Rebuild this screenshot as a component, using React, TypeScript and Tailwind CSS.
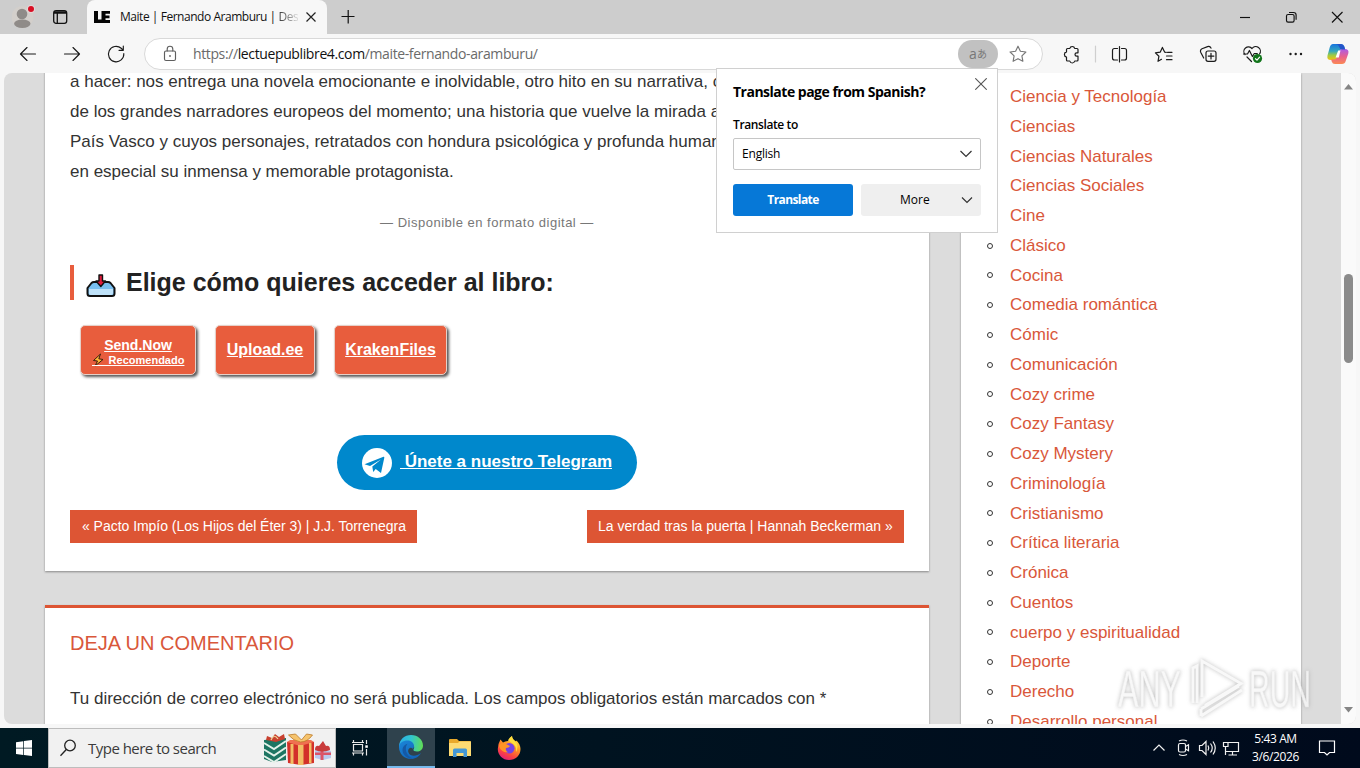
import type { ReactNode } from "react";

const categories = [
  "Ciencia y Tecnología", "Ciencias", "Ciencias Naturales", "Ciencias Sociales", "Cine", "Clásico", "Cocina",
  "Comedia romántica", "Cómic", "Comunicación", "Cozy crime", "Cozy Fantasy", "Cozy Mystery", "Criminología",
  "Cristianismo", "Crítica literaria", "Crónica", "Cuentos", "cuerpo y espiritualidad", "Deporte", "Derecho",
  "Desarrollo personal",
];

function Icon({ size = 20, className = "", children }: { size?: number; className?: string; children: ReactNode }) {
  return (
    <svg width={size} height={size} viewBox="0 0 20 20" fill="none" stroke="#1b1b1b" strokeWidth="1.15" strokeLinecap="round" strokeLinejoin="round" className={"shrink-0 " + className}>
      {children}
    </svg>
  );
}

function TabStrip() {
  return (
    <div className="flex h-[34px] bg-[#cdcdcd]">
      <div className="flex w-[87px] items-start bg-[#cdcdcd] pl-[12px]">
        <svg width="24" height="30" viewBox="12 0 24 30" className="shrink-0">
          <circle cx="22.5" cy="17" r="11" fill="#d3cfcb" />
          <circle cx="22" cy="14" r="5.3" fill="#8f8b88" />
          <ellipse cx="22.3" cy="23.8" rx="8.2" ry="4.2" fill="#8f8b88" />
          <circle cx="31" cy="9" r="4" fill="#e5d6d6" />
          <circle cx="31" cy="9" r="3" fill="#d80f24" />
        </svg>
        <svg width="16" height="34" viewBox="0 0 16 34" className="ml-[16px] shrink-0" fill="none" stroke="#111" strokeWidth="1.3">
          <rect x="1.7" y="10.7" width="13" height="12.6" rx="2.4" />
          <path d="M2 11.8h12.5M2 13.2h12.5M5.3 13v10" />
        </svg>
      </div>
      <div className="flex h-[34px] w-[240px] items-center rounded-t-[8px] bg-[#f7f7f7] pl-[7px]">
        <svg width="17" height="14" viewBox="0 0 17 14" fill="#050505">
          <path d="M0 1h4v8.500h3.500V13H0zM7.500 1H16v2.800h-4.500v1.700h4v2.700h-4v1.900H16V13H7.500z" />
        </svg>
        <div className="ml-[9px] w-[178px] overflow-hidden whitespace-nowrap font-['Open_Sans',sans-serif] text-[12px] leading-[18px] tracking-[-0.46px] text-[#111]">
          Maite | Fernando Aramburu | <span className="bg-linear-to-r from-[#333] to-[#ddd] bg-clip-text text-transparent">Des</span>
        </div>
        <svg width="12" height="12" viewBox="0 0 12 12" stroke="#222" strokeWidth="1.2" className="ml-[7px]">
          <path d="M1.500 1.500l9 9M10.500 1.500l-9 9" />
        </svg>
      </div>
      <svg width="16" height="34" viewBox="0 0 16 34" stroke="#111" strokeWidth="1.2" className="ml-[13px]">
        <path d="M1.500 16.500h13M8.200 10v13.500" />
      </svg>
      <div className="ml-auto flex items-center pr-[16px]">
        <svg width="104" height="34" viewBox="1240 0 104 34" fill="none" stroke="#111" strokeWidth="1.15">
          <path d="M1240 17.500h10" />
          <rect x="1286.500" y="14.500" width="7.600" height="7.600" rx="1.600" />
          <path d="M1289 12.500h4.500a2.600 2.600 0 0 1 2.600 2.600v4.700" />
          <path d="M1332 12l10.500 10.500M1342.500 12L1332 22.500" />
        </svg>
      </div>
    </div>
  );
}

function Toolbar() {
  return (
    <div className="flex h-[39px] items-center bg-[#f7f7f7] pl-[18px]">
      <Icon><path d="M17.500 10H2.500M9 3.500L2.500 10L9 16.500" /></Icon>
      <Icon className="ml-[24px]"><path d="M2.500 10h15M11 3.500L17.500 10L11 16.500" /></Icon>
      <Icon className="ml-[24px]"><path d="M17.800 9.600A7.700 7.700 0 1 1 15.200 4.300L17.200 6.100M17.300 2v4.300h-4.300" /></Icon>
      <div className="ml-[18px] flex h-[32px] w-[899px] items-center rounded-full border border-[#d9d9d9] bg-white pl-[15px]">
        <Icon size={20} className="opacity-70"><rect x="4.500" y="7" width="11" height="9.500" rx="1.500" /><path d="M7.200 7V5a2.800 2.800 0 0 1 5.600 0v2" /><circle cx="10" cy="12" r=".9" fill="#222" stroke="none" /></Icon>
        <div className="ml-[13px] whitespace-nowrap font-['Open_Sans',sans-serif] text-[14px] leading-[20px] tracking-[-0.38px] text-[#6a6a6a]">
          https://<span className="text-[#111]">lectuepublibre4.com</span>/maite-fernando-aramburu/
        </div>
        <div className="ml-auto flex items-center">
          <div className="flex h-[28px] w-[40px] items-center justify-center rounded-full bg-[#c1c1c1] font-['Open_Sans','Noto_Sans_CJK_JP',sans-serif] text-[12px] leading-none text-[#777]">
            <span className="text-[14px] leading-[14px]">a</span><span className="text-[10px] leading-[10px]">あ</span>
          </div>
          <Icon size={20} className="ml-[10px] mr-[14px] opacity-60"><path d="M10 2.200l2.400 5 5.500.8-4 3.800 1 5.500-4.900-2.600-4.900 2.600 1-5.500-4-3.800 5.500-.8z" /></Icon>
        </div>
      </div>
      <svg width="317" height="39" viewBox="1043 34 317 39" fill="none" stroke="#1b1b1b" strokeWidth="1.200" strokeLinejoin="round" strokeLinecap="round">
        <path d="M1067.500 48.500h2.300a2.500 2.500 0 0 1 4.900 0h2.300q1 0 1 1v3.300h-1.300a1.700 1.700 0 0 0 0 3.400h1.300v3.800q0 1-1 1h-2.300a2.500 2.500 0 0 1-4.900 0h-2.300q-1 0-1-1v-3a2.600 2.600 0 0 1 0-5.100v-2.400q0-1 1-1z" />
        <path d="M1095.500 46v16" stroke="#cfcfcf" />
        <path d="M1117.500 48.500h-3q-2 0-2 2v7.500q0 2 2 2h3M1121.500 48.500h3q2 0 2 2v7.500q0 2-2 2h-3M1119.500 46.500v15.500" />
        <path d="M1161.500 59.300l-3.500 2 .9-5-3.500-3.400 4.900-.8 2.100-4.700 2.200 4.700 1.700.2M1167.500 52.300h4.500M1166.500 56h5.500M1166.500 59.700h5.500" />
        <rect x="1206" y="51" width="10" height="10.300" rx="2" />
        <path d="M1211 53.300v5.700M1208.200 56.100h5.700M1203.700 58l-3-5.800a2.600 2.600 0 0 1 1.300-3.500l5.600-2.100a2.600 2.600 0 0 1 3.400 1.500" />
        <path d="M1245 54.500a4.600 4.600 0 0 1 7-6 4.600 4.600 0 0 1 7.500 5.500M1243.500 54h4l1.900-3.500 3 6 1.900-3h3M1247 57l4.500 4.500" />
        <circle cx="1257.500" cy="58.500" r="4.600" fill="#12751b" stroke="none" /><path d="M1255.500 58.700l1.500 1.400 2.600-3" stroke="#fff" />
        <g fill="#1b1b1b" stroke="none"><circle cx="1290.500" cy="54" r="1.200" /><circle cx="1295.700" cy="54" r="1.200" /><circle cx="1301" cy="54" r="1.200" /></g>
        <defs>
          <linearGradient id="cpA" x1="0" y1="0" x2="0" y2="1"><stop offset="0" stopColor="#1874df" /><stop offset=".45" stopColor="#35a9bd" /><stop offset=".7" stopColor="#9dcb45" /><stop offset="1" stopColor="#f4c20f" /></linearGradient>
          <linearGradient id="cpB" x1="0" y1="0" x2="0" y2="1"><stop offset="0" stopColor="#a95bea" /><stop offset=".5" stopColor="#e8618f" /><stop offset="1" stopColor="#fb8953" /></linearGradient>
        </defs>
        <g stroke="none">
          <path d="M1333 44h8q2.500 0 3.300 2.600l.8 2.900h-3q-2 0-2.700 2.300l-2 6.200q-.6 2-2.900 2h-3.500q-4.500 0-3.500-4.500l2.200-8q.9-3.500 3.300-3.500z" fill="url(#cpA)" />
          <path d="M1342 64h-7q-2.500 0-3.300-2.600l-.5-1.900h2.900q2.300 0 3-2.300l2-6q.7-2.300 3-2.300h2.700q4.600 0 3.500 4.500l-2.500 7.400q-.9 3.200-3.800 3.200z" fill="url(#cpB)" />
          <path d="M1336 44h5q2.500 0 3.300 2.600l.9 2.900h-3.200q-2.500-.5-3-3-.7-2.300-3-2.500z" fill="#2355c9" />
          <path d="M1338.200 50.500h2.300l-1.700 7h-3.200z" fill="#fff" />
        </g>
      </svg>
    </div>
  );
}

function TranslatePopup() {
  return (
    <div className="absolute left-[716px] top-[68px] z-10 h-[165px] w-[282px] border border-[#d0d0d0] bg-white px-[16px] font-['Open_Sans',sans-serif] text-[12px] text-black">
      <div className="flex h-[48px] items-center justify-between">
        <b className="whitespace-nowrap pb-[4px] text-[14px] font-bold tracking-[-0.5px]">Translate page from Spanish?</b>
        <svg width="12" height="12" viewBox="0 0 12 12" stroke="#555" strokeWidth="1.100" className="-mt-[18px] -mr-[6px]"><path d="M.3.3l11.400 11.400M11.700.3L.3 11.700" /></svg>
      </div>
      <div className="h-[21px] text-[12px] font-semibold leading-[16px] tracking-[-0.39px]">Translate to</div>
      <div className="flex h-[32px] items-center justify-between rounded-[2px] border border-[#c6c6c6] pl-[8px] pr-[8px] tracking-[-0.2px]">
        English
        <svg width="12" height="8" viewBox="0 0 12 8" fill="none" stroke="#333" strokeWidth="1.200"><path d="M.5 1l5.500 5.500L11.500 1" /></svg>
      </div>
      <div className="mt-[14px] flex gap-[8px]">
        <div className="flex h-[32px] w-[120px] items-center justify-center rounded-[3px] bg-[#0678d7] font-bold tracking-[-0.6px] text-white">Translate</div>
        <div className="flex h-[32px] w-[120px] items-center rounded-[3px] bg-[#efefef] pl-[39px] pr-[8px]">
          More
          <svg width="12" height="8" viewBox="0 0 12 8" fill="none" stroke="#333" strokeWidth="1.200" className="ml-auto"><path d="M1 1.500l5 5 5-5" /></svg>
        </div>
      </div>
    </div>
  );
}

const serverButton = "flex h-[50px] flex-col items-center justify-center rounded-[5px] border border-[#e6d0c8] bg-[#e85d3d] font-bold text-white shadow-[2px_2px_3px_#555]";

function Article() {
  return (
    <div className="h-[505px] bg-white px-[25px] shadow-[0_1px_2px_#888]">
      <div className="-mt-[7px] h-[120px] whitespace-nowrap pt-px text-[17px] leading-[30px] text-[#333]">
        <p>a hacer: nos entrega una novela emocionante e inolvidable, otro hito en su narrativa, c</p>
        <p>de los grandes narradores europeos del momento; una historia que vuelve la mirada a</p>
        <p>País Vasco y cuyos personajes, retratados con hondura psicológica y profunda human</p>
        <p>en especial su inmensa y memorable protagonista.</p>
      </div>
      <p className="mt-[27px] text-center text-[13px] leading-[20px] tracking-[0.5px] text-[#777]">— Disponible en formato digital —</p>
      <h2 className="mt-[32px] flex h-[35px] items-center border-l-4 border-[#e85d3d] pl-[12px] text-[25px] font-bold leading-[35px] text-[#222]">
        <svg width="30" height="26" viewBox="0 0 30 26" className="mt-[5px] mr-[10px]" strokeLinejoin="round">
          <path d="M1.500 16L5.500 11Q6.500 10 8 10h14q1.500 0 2.500 1l4 5v5.500q0 2.500-2.500 2.500H4q-2.500 0-2.500-2.500z" fill="#78bff0" stroke="#111" strokeWidth="2" />
          <path d="M3 17h24v4q0 2-2 2H5q-2 0-2-2z" fill="#bfe2f9" />
          <path d="M13 3h3.500v6h3l-4.700 5.500L10 9h3z" fill="#e01b3c" stroke="#111" strokeWidth="1.400" />
        </svg>
        Elige cómo quieres acceder al libro:
      </h2>
      <div className="mt-[25px] flex gap-[19px] pl-[10px]">
        <a className={serverButton + " w-[116px] pt-[3px] text-[14px] leading-[16px]"}>
          <span className="underline">Send.Now</span>
          <span className="flex items-center text-[11px] leading-[14px]">
            <svg width="14" height="14" viewBox="0 0 14 14" className="shrink-0"><path d="M8.500 1L1.500 7.500l4 .5-2.500 5 8-6.500-4.200-.7z" fill="#ffb636" stroke="#3a1c10" strokeWidth="1" /><path d="M0 12.500h14" stroke="#fff" /></svg>
            <span className="underline">&nbsp;Recomendado</span>
          </span>
        </a>
        <a className={serverButton + " w-[100px] text-[16px] underline"}>Upload.ee</a>
        <a className={serverButton + " w-[113px] text-[16px] underline"}>KrakenFiles</a>
      </div>
      <div className="mt-[60px] flex justify-center">
        <a className="flex h-[55px] w-[300px] items-center rounded-[28px] bg-[#0088cc] pl-[25px] text-[17px] font-bold text-white">
          <svg width="30" height="30" viewBox="0 0 30 30"><circle cx="15" cy="15" r="15" fill="#fff" /><path d="M2.500 16.300L21.500 8.700q1-.2.800 1L19 25l-5.300-3.900-2.500 2.800-.9-5.500 8.700-6.900-11 6.400z" fill="#0088cc" /></svg>
          <span className="ml-[8px] whitespace-pre pb-px tracking-[-0.01px] underline"> Únete a nuestro Telegram</span>
        </a>
      </div>
      <div className="mt-[20px] flex justify-between text-[14px] leading-[33px] text-white">
        <a className="w-[347px] whitespace-nowrap bg-[#dd5534] pl-[12px] tracking-[-0.03px]">« Pacto Impío (Los Hijos del Éter 3) | J.J. Torrenegra</a>
        <a className="w-[317px] whitespace-nowrap bg-[#dd5534] pl-[11px]">La verdad tras la puerta | Hannah Beckerman »</a>
      </div>
    </div>
  );
}

function Watermark() {
  return (
    <svg width="208" height="72" viewBox="1110 652 208 72" className="absolute left-[1110px] top-[652px] z-10 opacity-80 drop-shadow-[0_0_2px_#aaa]" fill="none">
      <g fill="#f7f7f7" stroke="#e8e8e8" strokeWidth=".5" fontFamily="'Liberation Sans', sans-serif" fontSize="52">
        <text x="1118" y="707" textLength="63" lengthAdjust="spacingAndGlyphs">ANY</text>
        <text x="1249" y="707" textLength="62" lengthAdjust="spacingAndGlyphs">RUN</text>
      </g>
      <path d="M1202 697v-36l39 22.500-36 22M1193 703v-35l4-2v37M1201 716l41-26M1201 709l38-23M1201 716v-7" stroke="#f7f7f7" strokeWidth="3" />
    </svg>
  );
}

function Gifts() {
  return (
    <svg width="68" height="36" viewBox="263 730 68 36" className="shrink-0">
      <path d="M264 740l22-2v22l-14 2-8-3z" fill="#1d7562" />
      <path d="M264 743l10 6 12-8M264 749.500l10 6 12-8M264 756l10 6 12-8" stroke="#e3f1e9" strokeWidth="2" fill="none" />
      <path d="M266 740l1-4 5 2 3-4 4 3 5-3 1 5-9 3z" fill="#c8402f" />
      <path d="M271 740q3-7 7-1" stroke="#f0d598" strokeWidth="1.200" fill="none" />
      <path d="M287 742l14-2 13 2v21l-13 2-13-2z" fill="#d3312a" />
      <path d="M287 742l13 4 14-4-3-2h-21z" fill="#ef7050" />
      <path d="M290.500 744h3v20h-3zM298 745h5.500v20H298zM309 743h2.500v20H309z" fill="#f2bd65" />
      <path d="M300.500 742q-7-1-12-7l7-1 6 6 5-6 6 1q-5 7-12 7z" fill="#f5c36d" stroke="#bd7a27" strokeWidth=".8" />
      <path d="M315 750l9-1 7 2v7l-8 2-8-2z" fill="#b9c9ef" />
      <path d="M320.500 750h3v10h-3zM315 752.500h16v2.500h-16z" fill="#db5368" />
      <path d="M315 750q0-5 4-4l4-5 3 5q4-1 4 4-8 3-15 0z" fill="#c93b3b" />
    </svg>
  );
}

function Taskbar() {
  return (
    <div className="flex h-[40px] bg-linear-to-r from-[#001a23] to-[#000a1c] font-['Open_Sans',sans-serif]">
      <div className="flex w-[48px] items-center justify-center">
        <svg width="16" height="16" viewBox="0 0 16 16" fill="#fff"><path d="M0 2.200l7.300-1v6.500H0zM8 1.100L16 0v7.700H8zM0 8.400h7.300v6.500l-7.300-1zM8 8.400h8V16l-8-1.100z" /></svg>
      </div>
      <div className="flex w-[288px] items-center border border-[#bdbdbd] bg-[#f1f1f1] pl-[10px]">
        <svg width="18" height="18" viewBox="0 0 18 18" fill="none" stroke="#222" strokeWidth="1.300"><circle cx="11" cy="6.500" r="5.300" /><path d="M7.300 10.500L1.500 16.800" /></svg>
        <span className="ml-[11px] whitespace-nowrap text-[15px] tracking-[-0.52px] text-[#3b3b3b]">Type here to search</span>
        <div className="ml-auto pr-[4px]"><Gifts /></div>
      </div>
      <div className="flex w-[51px] items-center pl-[15px]">
        <svg width="17" height="18" viewBox="0 0 17 18" fill="none" stroke="#e8e8e8" strokeWidth="1.200"><path d="M2.500 1v2.500h9V1M2.500 16.500V14h9v2.500M2.500 5.500h9v6.500h-9zM1 3.500h12M1 14h12M15.500 1v4M15.500 10v6.500" /><path d="M14.300 6.300h2.500v2.500h-2.500z" fill="#fff" stroke="none" /></svg>
      </div>
      <div className="flex w-[48px] items-center justify-center border-b-2 border-[#76b9ed] bg-[#2f424d]">
        <svg width="24" height="24" viewBox="0 0 24 24">
          <defs>
            <linearGradient id="edTop" x1="0" y1=".3" x2="1" y2=".4"><stop offset="0" stopColor="#2aaee8" /><stop offset=".5" stopColor="#32c5cd" /><stop offset="1" stopColor="#5fdc58" /></linearGradient>
            <linearGradient id="edBot" x1="0" y1="0" x2=".8" y2="1"><stop offset="0" stopColor="#1c86d8" /><stop offset="1" stopColor="#1062b8" /></linearGradient>
          </defs>
          <path d="M0 11C.5 4.500 5.500 0 12 0c7 0 12 5 12 10.500 0 4-3 6-6 6-2.500 0-4-1-3.500-2 1.500-2 .8-6-4-6C5 8.500 1 11 0 13z" fill="url(#edTop)" />
          <path d="M0 12c0-4 4-6.500 8.500-6.500 4 0 6.500 2.500 6.500 5.500 0 1.500-1 2.500-1 3-2-3-6 0-4.500 3.500C11 21.500 17 22 22 18c-2 3.700-5.800 6-10 6C5 24 0 18.500 0 12z" fill="url(#edBot)" />
          <path d="M8.500 8.700C5.500 12 6 20.500 14 23.700 6 24 2 17 4 12.500c1-2.300 2.800-3.500 4.500-3.800z" fill="#1559a6" />
        </svg>
      </div>
      <div className="flex w-[49px] items-center justify-center">
        <svg width="22" height="18" viewBox="0 0 22 18"><path d="M0 1q0-1 1-1h7l2 2h11q1 0 1 1v14H0z" fill="#e9a92b" /><path d="M0 4h9l1.500-1.500H22V17H0z" fill="#fddb73" /><path d="M4 18v-7q0-1.500 1.500-1.500h11Q18 9.500 18 11v7h-3.500v-4h-7v4z" fill="#4598d5" /></svg>
      </div>
      <div className="flex w-[49px] items-center justify-center">
        <svg width="24" height="24" viewBox="0 0 24 24">
          <defs><linearGradient id="ff" x1=".8" y1="0" x2=".3" y2="1"><stop offset="0" stopColor="#fff04a" /><stop offset=".4" stopColor="#ff9a22" /><stop offset=".75" stopColor="#fb4341" /><stop offset="1" stopColor="#e01f7a" /></linearGradient></defs>
          <path d="M3.500 3.500L6 6.500q2-1.500 5-1.500 1-3 4-5 0 3 4 5.500l.5-1C22 7 23.500 10 23.500 13c0 6.500-5 11-11.500 11S.8 19 .8 13q0-5 2.700-9.500z" fill="url(#ff)" />
          <circle cx="12.300" cy="12.300" r="5.300" fill="#7542e5" />
          <path d="M2 9q3-3.500 7-1l4 2q-1 2-4 2-1 2 2 4.500c-5 0-9-3.500-9-7.500z" fill="#ff9426" />
          <path d="M15 0q0 3 4 6 3 5 0 10 1-6-4-9-3-2-3.500-3Q12 2 15 0z" fill="#ffde3f" />
        </svg>
      </div>
      <div className="ml-auto flex items-center">
        <svg width="88" height="24" viewBox="1152 736 88 24" fill="none" stroke="#f1f1f1" strokeWidth="1.200">
          <path d="M1153.500 750.500l5.500-5.500 5.500 5.500" />
          <rect x="1178.500" y="743.500" width="7" height="8.500" rx="1.500" /><path d="M1185.500 746.500l3-1.700v6l-3-1.700M1179 741q4-2 8 0M1179 754.500q4 2 8 0" />
          <path d="M1199.500 745.500h2.500l4-4v13l-4-4h-2.500zM1208 745.500q1.500 2.500 0 5M1210.500 743.500q3.500 4.500 0 9M1213 741.500q4.500 6.500 0 13" />
          <path d="M1228 742.500h10.500v9H1226M1232.500 751.500v3.500M1228.500 755h8.500M1223.500 742.500h4.500v4h-4.500zM1225.500 746.500v8.500" />
        </svg>
        <div className="w-[71px] text-center text-[12px] leading-[18px] tracking-[-0.4px] text-white">5:43 AM<br />3/6/2026</div>
        <svg width="18" height="18" viewBox="0 0 18 18" fill="none" stroke="#fff" strokeWidth="1.200" className="ml-[7px] mr-[24px]"><path d="M1.500 2h15v11.500h-5L9 16l-2.500-2.500h-5z" /></svg>
      </div>
    </div>
  );
}

export default function App() {
  return (
    <div className="relative h-[768px] w-[1360px] overflow-hidden bg-[#f7f7f7] font-['Liberation_Sans',sans-serif]">
      <TabStrip />
      <Toolbar />
      <div className="h-[655px] px-[4px] pb-[4px]">
        <div className="flex h-[651px] overflow-hidden rounded-[8px] bg-[#dcdcdc]">
          <main className="ml-[41px] w-[884px]">
            <Article />
            <section className="mt-[34px] h-[140px] border-t-[3px] border-[#dd5534] bg-white px-[25px] pt-[21px] shadow-[0_1px_2px_#888]">
              <h3 className="text-[20px] leading-[28px] text-[#d9573a]">DEJA UN COMENTARIO</h3>
              <p className="mt-[27px] text-[17px] leading-[30px] text-[#333]">Tu dirección de correo electrónico no será publicada. Los campos obligatorios están marcados con *</p>
            </section>
          </main>
          <aside className="ml-[32px] w-[340px] bg-white pt-[9px] shadow-[0_1px_2px_#888]">
            <ul className="pl-[26px] text-[17px] leading-[29.75px] text-[#d9573a]">
              {categories.map((name) => (
                <li key={name} className="flex items-center whitespace-nowrap">
                  <span className="mr-[17px] h-[6px] w-[6px] rounded-full border border-[#333]" />
                  {name}
                </li>
              ))}
            </ul>
          </aside>
          <div className="ml-auto flex w-[15px] flex-col items-center bg-[#fafafa] py-[11px]">
            <svg width="9" height="6" viewBox="0 0 9 6" fill="#858585"><path d="M4.500 0L9 5.500H0z" /></svg>
            <div className="mt-[184px] h-[89px] w-[9px] rounded-full bg-[#8b8b8b]" />
            <svg width="9" height="6" viewBox="0 0 9 6" fill="#858585" className="mt-auto"><path d="M4.500 5.500L9 0H0z" /></svg>
          </div>
        </div>
      </div>
      <Taskbar />
      <TranslatePopup />
      <Watermark />
    </div>
  );
}
